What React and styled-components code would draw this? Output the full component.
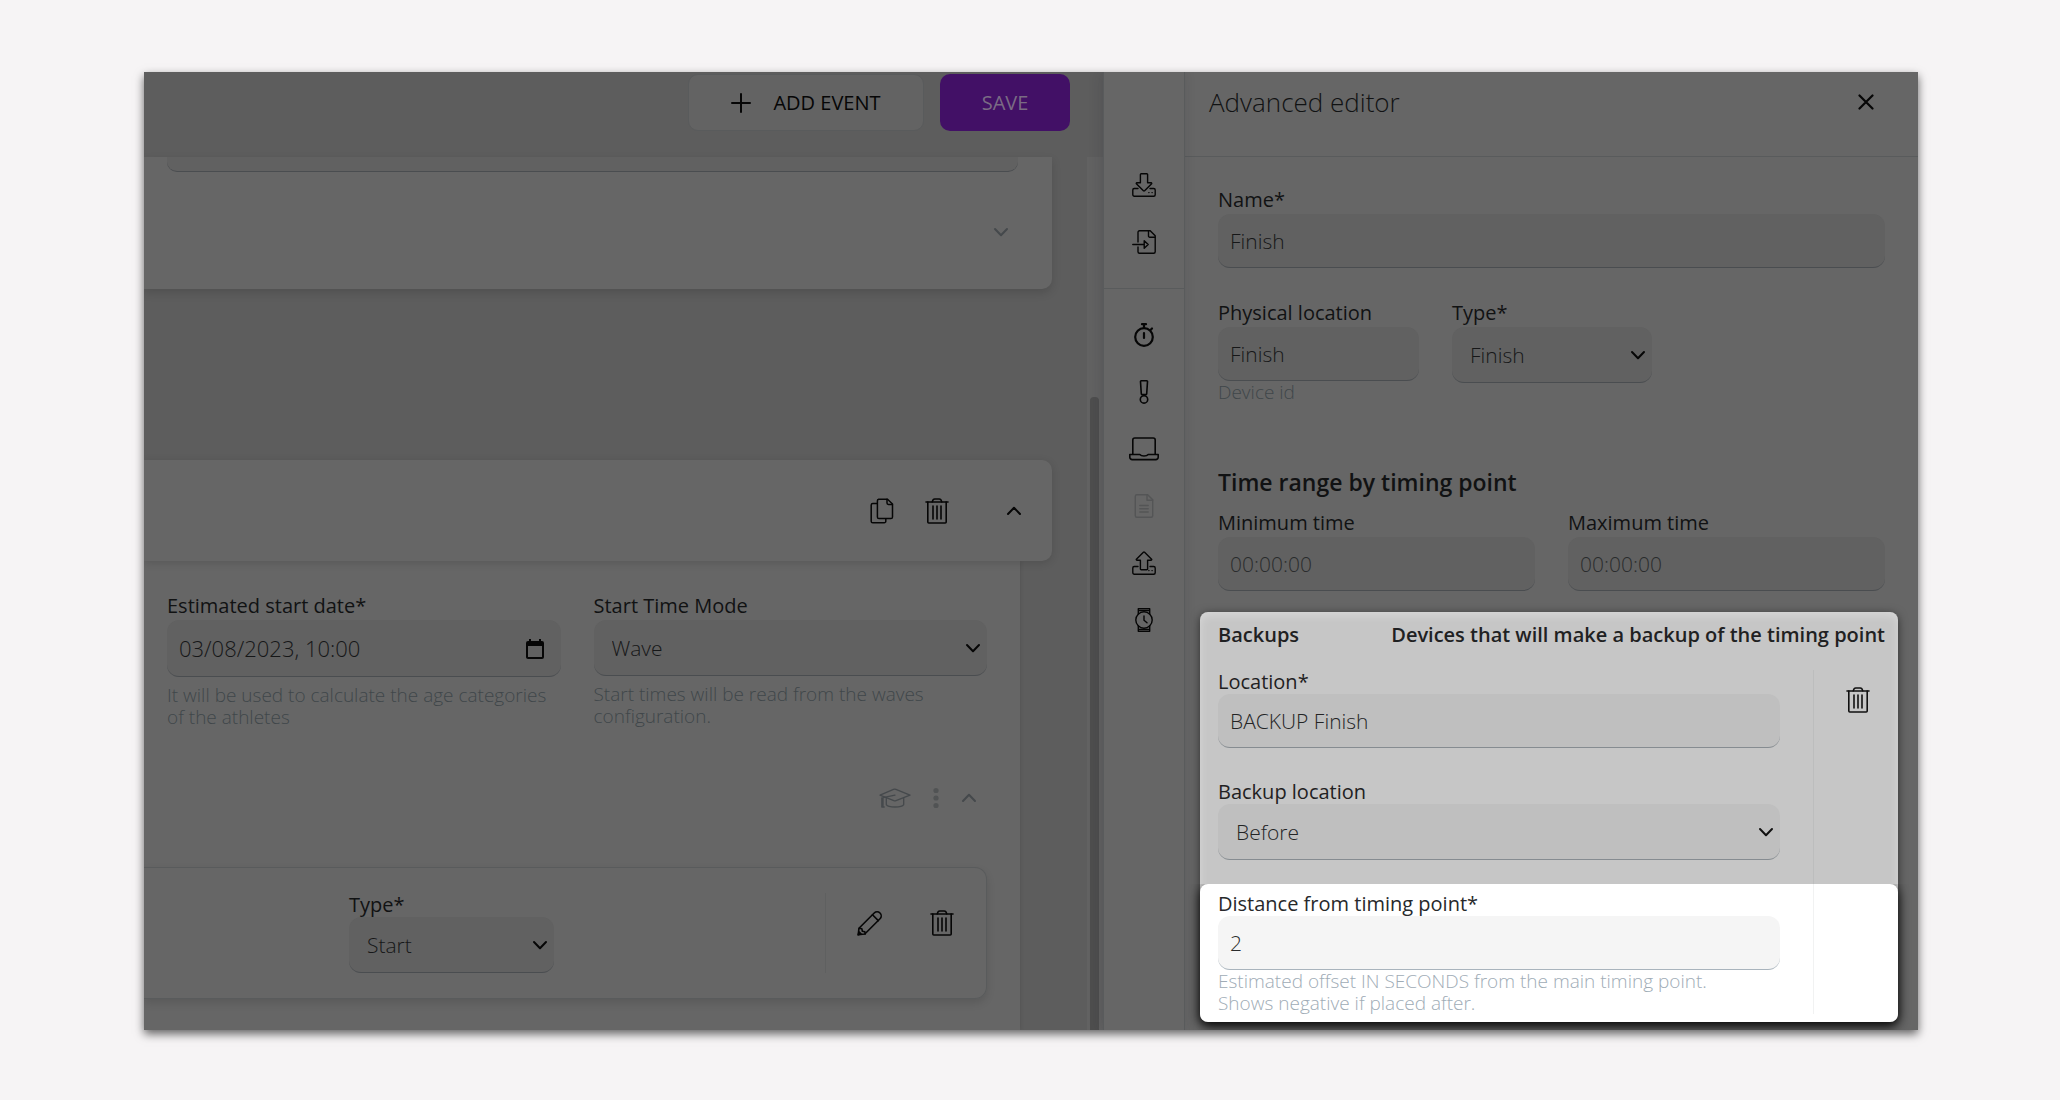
import React, { useId } from 'react';
import styled, { createGlobalStyle, ThemeProvider } from 'styled-components';

const dimTheme = {
  page: '#5d5d5d',
  surface: '#666666',
  field: '#616161',
  line: '#4a4d50',
  border: '#595b5c',
  divider: '#5f6060',
  label: '#111213',
  value: '#161718',
  placeholder: '#2a2c2d',
  hint: '#40464a',
  muted: '#45494c',
  icon: '#060606',
};

const softTheme = {
  ...dimTheme,
  surface: '#c6c6c6',
  field: '#bfbfbf',
  line: '#868c91',
  divider: '#bcbdbd',
  label: '#1f2122',
  value: '#232425',
  icon: '#111111',
};

const litTheme = {
  ...softTheme,
  surface: '#ffffff',
  field: '#f5f5f5',
  line: '#a9b4bd',
  divider: '#f1f2f2',
  label: '#27292b',
  value: '#2a2c2d',
  hint: '#a0acb6',
};

/* ---------- icons ---------- */

const Svg = ({ size = 24, width, stroke = 1.4, children }) => (
  <svg
    width={width || size}
    height={size}
    viewBox={`0 0 ${width || size} ${size}`}
    fill="none"
    stroke="currentColor"
    strokeWidth={stroke}
    strokeLinecap="round"
    strokeLinejoin="round"
    aria-hidden="true"
  >
    {children}
  </svg>
);

const ChevronDown = () => (
  <Svg size={16} stroke={2}>
    <path d="M2 5l6 6.200l6-6.200" />
  </Svg>
);

const ChevronUp = () => (
  <Svg size={16} stroke={2}>
    <path d="M2 11l6-6.200l6 6.200" />
  </Svg>
);

const PlusIcon = () => (
  <Svg size={20} stroke={2}>
    <path d="M10 1v18M1 10h18" />
  </Svg>
);

const CloseIcon = () => (
  <Svg size={16} stroke={2.2}>
    <path d="M1.500 1.500l13 13M14.500 1.500l-13 13" />
  </Svg>
);

const TrashIcon = () => (
  <Svg size={26} stroke={1.6}>
    <path d="M2 4h22" />
    <path d="M8.300 3.800c.4-1.800 1.200-2.800 2.400-2.800h4.600c1.200 0 2 1 2.400 2.800" />
    <path d="M3.800 4v20a1 1 0 0 0 1 1h16.400a1 1 0 0 0 1-1V4" />
    <path d="M9 8v13M13 8v13M17 8v13" />
  </Svg>
);

const CopyIcon = () => (
  <Svg size={26} stroke={1.5}>
    <path d="M9.500 1.200h9L23.500 6v13a1.600 1.600 0 0 1-1.600 1.600H10a1.600 1.600 0 0 1-1.600-1.600V2.800a1.600 1.600 0 0 1 1.600-1.600z" />
    <path d="M18 1.200V5a1.400 1.400 0 0 0 1.400 1.400h4" />
    <path d="M8 5.500H3.800A1.600 1.600 0 0 0 2.200 7v16.200a1.600 1.600 0 0 0 1.600 1.600h11.400a1.600 1.600 0 0 0 1.600-1.600v-2.400" />
  </Svg>
);

const PencilIcon = () => (
  <Svg size={26} stroke={1.6}>
    <path d="M1.200 24.800l.8-6.600L17.200 3a4.100 4.100 0 0 1 5.800 5.800L7.800 24z" />
    <path d="M15.500 4.800l5.800 5.800" />
    <path d="M2.200 18.200l2.600.6.600 2.400 2.400.5.400 2.300" />
    <path d="M1.200 24.800l1-2.800 1.800 1.800z" fill="currentColor" />
  </Svg>
);

const CapIcon = () => (
  <Svg size={20} width={32} stroke={1.3}>
    <path d="M1 7.200L14.500 1.300a3 3 0 0 1 2.400 0L31 7.200l-14 5.400a3 3 0 0 1-2.200 0z" />
    <path d="M16 7.200L4 9.600V19M2.800 10v9h2.400" />
    <path d="M7.300 10.200v6.400c2 3.200 15.400 3.200 17.400 0v-6.400" />
  </Svg>
);

const DotsIcon = () => (
  <svg width="8" height="22" viewBox="0 0 8 22" fill="#515354" aria-hidden="true">
    <circle cx="4" cy="3.500" r="2.600" />
    <circle cx="4" cy="11" r="2.600" />
    <circle cx="4" cy="18.500" r="2.600" />
  </svg>
);

const CalendarIcon = () => (
  <svg width="18" height="20" viewBox="0 0 18 20" fill="currentColor" aria-hidden="true">
    <path d="M16 2h-1V0h-2v2H5V0H3v2H2a2 2 0 0 0-2 2v14c0 1.100.9 2 2 2h14a2 2 0 0 0 2-2V4a2 2 0 0 0-2-2zm0 16H2V7h14z" />
  </svg>
);

const Tray = () => (
  <>
    <path d="M6 15.500H2.200A1.500 1.500 0 0 0 .8 17v4.700a1.500 1.500 0 0 0 1.500 1.500h19.400a1.500 1.500 0 0 0 1.500-1.500V17a1.500 1.500 0 0 0-1.500-1.500H18" />
    <path d="M16.800 19.600h.2M20 19.600h.2" />
  </>
);

const DownloadIcon = () => (
  <Svg>
    <Tray />
    <path d="M9.200.8h5.600a.8.8 0 0 1 .8.800v8.200h3.600a.6.6 0 0 1 .4 1l-7 7a.9.9 0 0 1-1.200 0l-7-7a.6.6 0 0 1 .4-1h3.600V1.600a.8.8 0 0 1 .8-.8z" />
  </Svg>
);

const UploadIcon = () => (
  <Svg>
    <Tray />
    <path d="M9.200 18.800h5.600a.8.8 0 0 0 .8-.8V9.200h3.600a.6.6 0 0 0 .4-1l-7-7a.9.9 0 0 0-1.200 0l-7 7a.6.6 0 0 0 .4 1h3.600V18a.8.8 0 0 0 .8.800z" />
  </Svg>
);

const FileInIcon = () => (
  <Svg>
    <path d="M6 12V2.300A1.500 1.500 0 0 1 7.500.8h10.700l5 5v15.900a1.500 1.500 0 0 1-1.500 1.500H7.500A1.500 1.500 0 0 1 6 21.700V17" />
    <path d="M16.500 1v5a1.200 1.200 0 0 0 1.200 1.200H23" />
    <path d="M.8 14.500h11" />
    <path d="M12.200 10.800l4 3.700-4 3.700z" />
  </Svg>
);

const StopwatchIcon = () => (
  <Svg stroke={2.2}>
    <circle cx="12" cy="14" r="8.800" />
    <path d="M12 10v5M12 1.500V5M10 1.200h4M18.500 7l1.500-1.500" />
  </Svg>
);

const AlertIcon = () => (
  <Svg stroke={1.6}>
    <path d="M9.300.8h5.400a.8.8 0 0 1 .8.900l-.8 12a.9.9 0 0 1-.9.900h-3.600a.9.9 0 0 1-.9-.9l-.8-12a.8.8 0 0 1 .8-.9z" />
    <circle cx="12" cy="19.400" r="3.700" />
  </Svg>
);

const LaptopIcon = () => (
  <Svg width={30} stroke={1.6}>
    <path d="M3.800 17V3a2 2 0 0 1 2-2h18.400a2 2 0 0 1 2 2v14" />
    <path d="M.8 17.500h10c1 1.300 2 1.500 4.200 1.500s3.200-.2 4.200-1.500h10v2.700a2.400 2.400 0 0 1-2.400 2.400H3.200a2.400 2.400 0 0 1-2.400-2.400z" />
  </Svg>
);

const FileIcon = () => (
  <Svg>
    <path d="M4.800.8h10.900l5 5v15.900a1.500 1.500 0 0 1-1.500 1.500H4.800a1.500 1.500 0 0 1-1.500-1.500V2.300A1.500 1.500 0 0 1 4.800.8z" />
    <path d="M15 1v5.200h5.500M7.800 11.500h8.400M7.800 14.700h8.400M7.800 18h8.400" />
  </Svg>
);

const WatchIcon = () => (
  <Svg>
    <circle cx="12" cy="12" r="8.200" />
    <path d="M12 8v4.300l3 2.500M6.300 6V.8h11.400V6M6.300 18v5.200h11.400V18M6.300 2.600h11.400M6.300 21.400h11.400" />
  </Svg>
);

/* ---------- form parts ---------- */

const Field = ({ label, value, placeholder, hint, gap, hintGap, icon }) => {
  const id = useId();
  return (
    <FieldBox>
      <Label htmlFor={id} $gap={gap}>{label}</Label>
      <Control>
        <Input id={id} defaultValue={value} placeholder={placeholder} $large={!!icon} />
        {icon && <ControlIcon $inset="17px">{icon}</ControlIcon>}
      </Control>
      {hint && <Hint $gap={hintGap}>{hint}</Hint>}
    </FieldBox>
  );
};

const SelectField = ({ label, value, hint, gap, hintGap }) => {
  const id = useId();
  return (
    <FieldBox>
      <Label htmlFor={id} $gap={gap}>{label}</Label>
      <Control>
        <Select id={id} defaultValue={value}>
          <option>{value}</option>
        </Select>
        <ControlIcon $inset="6px"><ChevronDown /></ControlIcon>
      </Control>
      {hint && <Hint $gap={hintGap}>{hint}</Hint>}
    </FieldBox>
  );
};

const railTop = [
  { name: 'Import', icon: <DownloadIcon /> },
  { name: 'Load file', icon: <FileInIcon /> },
];

const railBottom = [
  { name: 'Timing', icon: <StopwatchIcon /> },
  { name: 'Alerts', icon: <AlertIcon /> },
  { name: 'Devices', icon: <LaptopIcon /> },
  { name: 'Report', icon: <FileIcon />, disabled: true },
  { name: 'Export', icon: <UploadIcon /> },
  { name: 'Watch', icon: <WatchIcon /> },
];

const EventWorkspace = () => (
  <Workspace>
    <Toolbar>
      <AddButton type="button">
        <PlusIcon />
        ADD EVENT
      </AddButton>
      <SaveButton type="button">SAVE</SaveButton>
    </Toolbar>
    <ScrollArea>
      <Content>
        <SummaryCard>
          <FieldEnd />
          <IconButton type="button" aria-label="Expand section" $muted>
            <ChevronDown />
          </IconButton>
        </SummaryCard>
        <EventCard>
          <IconButton type="button" aria-label="Copy event"><CopyIcon /></IconButton>
          <IconButton type="button" aria-label="Delete event"><TrashIcon /></IconButton>
          <CollapseButton type="button" aria-label="Collapse event"><ChevronUp /></CollapseButton>
        </EventCard>
        <EventBody>
          <TwoColumns>
            <Field
              label="Estimated start date*"
              value="03/08/2023, 10:00"
              hint="It will be used to calculate the age categories of the athletes"
              gap="2px"
              hintGap="7px"
              icon={<CalendarIcon />}
            />
            <SelectField
              label="Start Time Mode"
              value="Wave"
              hint="Start times will be read from the waves configuration."
              gap="2px"
              hintGap="7px"
            />
          </TwoColumns>
          <SplitActions>
            <IconButton type="button" aria-label="Categories" $muted><CapIcon /></IconButton>
            <IconButton type="button" aria-label="More options" $muted><DotsIcon /></IconButton>
            <IconButton type="button" aria-label="Collapse splits" $muted><ChevronUp /></IconButton>
          </SplitActions>
          <SplitCard>
            <SplitType>
              <SelectField label="Type*" value="Start" />
            </SplitType>
            <SplitTools>
              <IconButton type="button" aria-label="Edit split"><PencilIcon /></IconButton>
              <IconButton type="button" aria-label="Delete split"><TrashIcon /></IconButton>
            </SplitTools>
          </SplitCard>
        </EventBody>
      </Content>
      <Track><Thumb /></Track>
    </ScrollArea>
  </Workspace>
);

const Backups = () => (
  <ThemeProvider theme={softTheme}>
    <BackupCard>
      <BackupHeader>
        <span>Backups</span>
        <span>Devices that will make a backup of the timing point</span>
      </BackupHeader>
      <BackupRow>
        <BackupFields>
          <Field label="Location*" value="BACKUP Finish" />
          <SelectField label="Backup location" value="Before" />
        </BackupFields>
        <BackupSide>
          <IconButton type="button" aria-label="Delete backup"><TrashIcon /></IconButton>
        </BackupSide>
      </BackupRow>
      <ThemeProvider theme={litTheme}>
        <Highlight>
          <Field
            label="Distance from timing point*"
            value="2"
            hint={<>Estimated offset IN SECONDS from the main timing point.<br />Shows negative if placed after.</>}
          />
          <HighlightSide />
        </Highlight>
      </ThemeProvider>
    </BackupCard>
  </ThemeProvider>
);

const App = () => (
  <ThemeProvider theme={dimTheme}>
    <GlobalStyle />
    <Page>
      <Frame>
        <EventWorkspace />
        <Rail>
          <RailGroup $first>
            {railTop.map((item) => (
              <RailButton key={item.name} type="button" aria-label={item.name}>{item.icon}</RailButton>
            ))}
          </RailGroup>
          <RailGroup>
            {railBottom.map((item) => (
              <RailButton key={item.name} type="button" aria-label={item.name} disabled={item.disabled}>
                {item.icon}
              </RailButton>
            ))}
          </RailGroup>
        </Rail>
        <Editor>
          <EditorHeader>
            <EditorTitle>Advanced editor</EditorTitle>
            <IconButton type="button" aria-label="Close"><CloseIcon /></IconButton>
          </EditorHeader>
          <EditorBody>
            <Field label="Name*" value="Finish" gap="2px" />
            <LocationRow>
              <Field label="Physical location" value="Finish" hint="Device id" gap="2px" />
              <SelectField label="Type*" value="Finish" gap="2px" />
            </LocationRow>
            <SectionTitle>Time range by timing point</SectionTitle>
            <TwoColumns>
              <Field label="Minimum time" placeholder="00:00:00" gap="2px" />
              <Field label="Maximum time" placeholder="00:00:00" gap="2px" />
            </TwoColumns>
          </EditorBody>
          <Backups />
        </Editor>
      </Frame>
    </Page>
  </ThemeProvider>
);

/* ---------- styles ---------- */

const GlobalStyle = createGlobalStyle`
  * {
    box-sizing: border-box;
  }

  body {
    margin: 0;
    background: #f6f4f5;
    font-family: 'Open Sans', 'Noto Sans', sans-serif;
    font-size: 20px;
  }

  button, input, select {
    font: inherit;
  }

  svg {
    display: block;
    flex-shrink: 0;
  }
`;

const Page = styled.main`
  padding: 72px 142px 70px 144px;
`;

const Frame = styled.div`
  display: grid;
  grid-template-columns: minmax(0, 1fr) 82px 733px;
  overflow: hidden;
  background: ${({ theme }) => theme.surface};
  box-shadow: 0 4px 9px rgba(0, 0, 0, 0.6);
`;

const Workspace = styled.section`
  display: flex;
  flex-direction: column;
  background: ${({ theme }) => theme.page};
`;

const Toolbar = styled.header`
  display: flex;
  justify-content: flex-end;
  gap: 16px;
  height: 85px;
  padding: 2px 33px 0 0;
`;

const ToolbarButton = styled.button`
  display: flex;
  align-items: center;
  justify-content: center;
  gap: 22px;
  height: 57px;
  border-radius: 10px;
`;

const AddButton = styled(ToolbarButton)`
  width: 236px;
  color: ${({ theme }) => theme.icon};
  background: #636363;
  border: 1px solid ${({ theme }) => theme.border};
`;

const SaveButton = styled(ToolbarButton)`
  width: 130px;
  color: #7a6b84;
  background: #421066;
  border: 0;
`;

const ScrollArea = styled.div`
  display: grid;
  grid-template-columns: minmax(0, 1fr) 16px;
  flex: 1;
`;

const Content = styled.div`
  display: flex;
  flex-direction: column;
  padding-right: 35px;
`;

const SummaryCard = styled.div`
  display: flex;
  flex-direction: column;
  align-items: flex-end;
  gap: 52px;
  height: 132px;
  padding: 0 34px 0 23px;
  background: ${({ theme }) => theme.surface};
  border-radius: 0 0 10px 0;
  box-shadow: 0 4px 10px rgba(0, 0, 0, 0.14);

  button {
    margin-right: 9px;
  }
`;

const FieldEnd = styled.div`
  align-self: stretch;
  height: 15px;
  background: ${({ theme }) => theme.field};
  border-bottom: 1px solid ${({ theme }) => theme.line};
  border-radius: 0 0 10px 10px;
`;

const EventCard = styled.div`
  display: flex;
  align-items: center;
  justify-content: flex-end;
  gap: 29px;
  position: relative;
  height: 101px;
  margin-top: 171px;
  padding-right: 30px;
  background: ${({ theme }) => theme.surface};
  border-radius: 0 10px 10px 0;
  box-shadow: 0 2px 8px rgba(0, 0, 0, 0.14);
`;

const EventBody = styled.div`
  flex: 1;
  margin-right: 32px;
  padding: 33px 33px 31px 0;
  background: ${({ theme }) => theme.surface};
  box-shadow: 0 0 4px rgba(0, 0, 0, 0.14);

  & > :first-child {
    padding-left: 23px;
  }
`;

const TwoColumns = styled.div`
  display: grid;
  grid-template-columns: 1fr 1fr;
  gap: 33px;
`;

const SplitActions = styled.div`
  display: flex;
  align-items: center;
  justify-content: flex-end;
  gap: 21px;
  height: 139px;
  padding-right: 10px;
`;

const SplitCard = styled.div`
  display: flex;
  justify-content: space-between;
  height: 132px;
  padding: 25px 0 25px 205px;
  border: 1px solid ${({ theme }) => theme.border};
  border-left: 0;
  border-radius: 0 12px 12px 0;
  box-shadow: 0 4px 8px rgba(0, 0, 0, 0.12);
`;

const SplitType = styled.div`
  width: 205px;
`;

const SplitTools = styled.div`
  display: flex;
  align-items: flex-start;
  gap: 46px;
  padding: 17px 31px 0 31px;
  border-left: 1px solid ${({ theme }) => theme.divider};
`;

const Track = styled.div`
  padding: 240px 4px 0 3px;
  background: #626262;
`;

const Thumb = styled.div`
  height: 100%;
  background: #4e4e4e;
  border-radius: 4px 4px 0 0;
`;

const Rail = styled.nav`
  position: relative;
  padding-top: 84px;
  background: ${({ theme }) => theme.surface};
  border: solid ${({ theme }) => theme.border};
  border-width: 0 1px;
  box-shadow: -2px 0 12px rgba(30, 30, 45, 0.16);
`;

const RailGroup = styled.div`
  display: flex;
  flex-direction: column;
  padding: ${({ $first }) => ($first ? '0 0 18px' : '17px 0')};
  border-bottom: ${({ $first, theme }) => ($first ? `1px solid ${theme.border}` : '0')};
`;

const IconButton = styled.button`
  display: flex;
  align-items: center;
  justify-content: center;
  padding: 0;
  color: ${({ $muted, theme }) => ($muted ? theme.muted : theme.icon)};
  background: none;
  border: 0;
  cursor: pointer;
`;

const CollapseButton = styled(IconButton)`
  margin-left: 27px;
`;

const RailButton = styled(IconButton)`
  height: 57px;

  &:disabled {
    color: #545556;
  }
`;

const Editor = styled.aside`
  display: flex;
  flex-direction: column;
  padding-bottom: 8px;
`;

const EditorHeader = styled.header`
  display: flex;
  align-items: flex-start;
  justify-content: space-between;
  height: 85px;
  padding: 13px 44px 0 24px;
  border-bottom: 1px solid ${({ theme }) => theme.border};

  button {
    height: 34px;
  }
`;

const EditorTitle = styled.h1`
  margin: 0;
  color: ${({ theme }) => theme.label};
  font-size: 26px;
  font-weight: 300;
  line-height: 34px;
`;

const EditorBody = styled.div`
  padding: 31px 33px 21px;
`;

const LocationRow = styled.div`
  display: grid;
  grid-template-columns: 201px 200px;
  gap: 33px;
  margin: 33px 0 64px;
`;

const SectionTitle = styled.h2`
  margin: 0 0 14px;
  color: ${({ theme }) => theme.label};
  font-size: 23px;
  font-weight: 600;
  line-height: 30px;
`;

const FieldBox = styled.div`
  display: flex;
  flex-direction: column;
  flex: 1;
  min-width: 0;
`;

const Label = styled.label`
  margin-bottom: ${({ $gap }) => $gap || 0};
  color: ${({ theme }) => theme.label};
  line-height: 24px;
`;

const Control = styled.div`
  display: grid;
  align-items: center;

  & > * {
    grid-area: 1 / 1;
  }
`;

const Input = styled.input`
  width: 100%;
  height: ${({ $large }) => ($large ? 57 : 54)}px;
  padding: 0 12px;
  color: ${({ theme }) => theme.value};
  font-size: ${({ $large }) => ($large ? 22 : 21)}px;
  font-weight: 300;
  background: ${({ theme }) => theme.field};
  border: 0;
  border-bottom: 1px solid ${({ theme }) => theme.line};
  border-radius: 12px;
  outline: none;

  &::placeholder {
    color: ${({ theme }) => theme.placeholder};
    opacity: 1;
  }
`;

const Select = styled.select`
  width: 100%;
  height: 56px;
  padding: 0 18px;
  color: ${({ theme }) => theme.value};
  font-size: 21px;
  font-weight: 300;
  appearance: none;
  background: ${({ theme }) => theme.field};
  border: 0;
  border-bottom: 1px solid ${({ theme }) => theme.line};
  border-radius: 12px;
  outline: none;
`;

const ControlIcon = styled.span`
  justify-self: end;
  margin-right: ${({ $inset }) => $inset};
  color: ${({ theme }) => theme.icon};
  pointer-events: none;
`;

const Hint = styled.p`
  margin: ${({ $gap }) => $gap || 0} 0 0;
  color: ${({ theme }) => theme.hint};
  font-size: 19px;
  font-weight: 300;
  line-height: 22px;
`;

const BackupCard = styled.section`
  margin: 0 20px 0 15px;
  background: ${({ theme }) => theme.surface};
  border-radius: 8px;
  box-shadow: 0 2px 10px rgba(0, 0, 0, 0.55), inset 0 3px 10px rgba(255, 255, 255, 0.3);
`;

const BackupHeader = styled.header`
  display: flex;
  justify-content: space-between;
  padding: 11px 13px 23px 18px;
  color: ${({ theme }) => theme.label};
  font-weight: 600;
  line-height: 24px;
`;

const BackupRow = styled.div`
  display: flex;
  gap: 33px;
  padding-left: 18px;
`;

const BackupFields = styled.div`
  display: flex;
  flex: 1;
  flex-direction: column;
  gap: 32px;
  padding-bottom: 24px;
`;

const BackupSide = styled.div`
  width: 85px;
  padding: 17px 0 0 31px;
  border-left: 1px solid ${({ theme }) => theme.divider};
`;

const Highlight = styled.div`
  display: flex;
  gap: 33px;
  padding: 8px 0 8px 18px;
  background: ${({ theme }) => theme.surface};
  border-radius: 8px;
  box-shadow: 0 4px 12px rgba(0, 0, 0, 0.85);
  clip-path: inset(0 -20px -20px);
`;

const HighlightSide = styled.div`
  width: 85px;
  margin-top: -8px;
  border-left: 1px solid ${({ theme }) => theme.divider};
`;

export default App;
